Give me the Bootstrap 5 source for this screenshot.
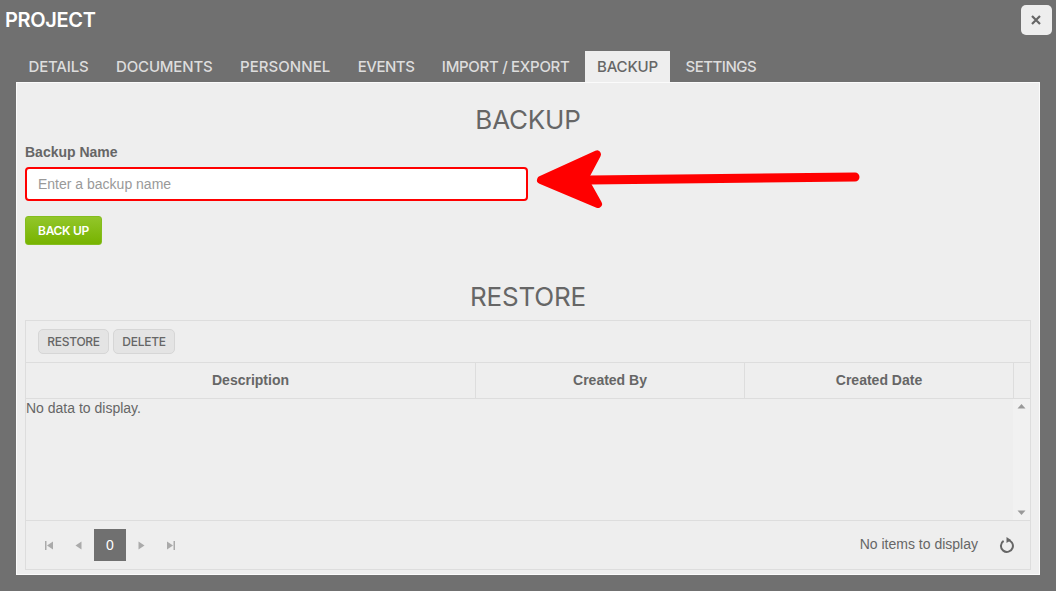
<!DOCTYPE html>
<html lang="en"><head><meta charset="utf-8"><title>Project</title>
<link rel="stylesheet" href="https://cdn.jsdelivr.net/npm/bootstrap@5.3.0/dist/css/bootstrap.min.css">
<style>
html,body{height:591px;overflow:hidden}
body{background:#707070;font-family:"Liberation Sans",Arial,sans-serif;color:#666;position:relative}
.disp{font-family:Inter,"Open Sans",sans-serif}
.topbar{height:51px;padding:5px 4px 0 5px}
.ptitle{font-size:20px;font-weight:600;color:#fff;letter-spacing:-.35px;margin:0;line-height:30px}
.closer{width:31px;height:30px;background:#eee;border:0;border-radius:5px;padding:0 1px 0 0;color:#666}
.tabrow{padding-left:16px;height:31px}
.tabitem{display:block;padding:0 12.5px;margin-right:2.5px;height:31px;line-height:31px;font-size:15px;font-weight:500;color:#ddd;letter-spacing:-.17px;text-decoration:none}
.tabitem.on{background:#eee;color:#666}
.tabitem.wider{letter-spacing:.05px}
.tabitem.tighter{letter-spacing:-.3px}
.tabitem.tightest{letter-spacing:-.5px}
.panel{margin:0 16px;height:493px;background:#eee;border:1px solid #fbfbfb;padding:0 8px}
.heading{font-size:26px;font-weight:400;color:#666;text-align:center;margin:0;letter-spacing:-.2px;line-height:30px}
.h1wrap{padding-top:22px;height:61px}
.lab{font-size:14px;font-weight:700;line-height:16px;margin:0 0 7px;display:block}
.nameinput{width:503px;height:34px;border:2px solid #f00;border-radius:4px;padding:0 11px;font-size:14px;background:#fff;color:#666}
.nameinput::placeholder{color:#999;opacity:1}
.nameinput:focus{border-color:#f00;box-shadow:none}
.greenbtn{margin-top:15px;width:77px;height:29px;padding:0;border:1px solid #84bd1e;border-radius:3px;background:linear-gradient(#92c62a,#77b300);color:#fff;font-size:12px;font-weight:600;letter-spacing:-.3px}
.h2wrap{margin-top:37px;height:30px}
.gridbox{margin-top:8px;height:250px;border:1px solid #ddd}
.tools{height:42px;padding:8px 12px;border-bottom:1px solid #ddd;gap:4px}
.toolbtn{height:25px;padding:0;border:1px solid #d6d6d6;border-radius:5px;background:#e4e4e4;color:#666;font-size:12px;font-weight:500;letter-spacing:-.25px}
.w71{width:71px}.w62{width:62px}
.hdr{height:36px;border-bottom:1px solid #ddd;font-size:14px;font-weight:700}
.hcell{border-right:1px solid #ddd;display:flex;align-items:center;justify-content:center}
.c1{width:450px}.c2,.c3{width:269px}.c4{flex:1}
.gbody{height:121px;font-size:14px;line-height:16px}
.gmsg{flex:1;padding:1px 0}
.sbar{width:17px;background:#f1f1f1}
.gfoot{height:49px;border-top:1px solid #ddd;padding:0 15px 0 11.5px;font-size:14px}
.pgcur{width:32px;height:32px;background:#707070;color:#fff;display:flex;align-items:center;justify-content:center;font-size:14px;margin:0 4px}
.pgi{width:23px;display:flex;justify-content:center}
.gapfirst{margin-right:6.5px}
.gaplast{margin-left:5.5px}
.noitems{padding-bottom:1px;padding-left:1px}
.refresh{margin-left:21px}
.overlay{position:absolute;left:0;top:0;pointer-events:none}
</style></head><body>
<div class="topbar d-flex justify-content-between align-items-start">
  <h1 class="ptitle disp">PROJECT</h1>
  <button class="closer d-flex align-items-center justify-content-center" aria-label="Close"><svg width="10" height="10" viewBox="0 0 10 10"><path d="M1 1L9 9M9 1L1 9" stroke="#666" stroke-width="2.2"/></svg></button>
</div>
<nav class="tabrow d-flex disp">
  <a class="tabitem" href="#">DETAILS</a><a class="tabitem" href="#">DOCUMENTS</a><a class="tabitem wider" href="#">PERSONNEL</a><a class="tabitem tightest" href="#">EVENTS</a><a class="tabitem tighter" href="#">IMPORT / EXPORT</a><a class="tabitem on" href="#">BACKUP</a><a class="tabitem tightest" href="#">SETTINGS</a>
</nav>
<main class="panel">
  <div class="h1wrap"><h2 class="heading disp">BACKUP</h2></div>
  <label class="lab" for="bn">Backup Name</label>
  <input id="bn" class="form-control nameinput" placeholder="Enter a backup name">
  <button class="greenbtn d-block disp">BACK UP</button>
  <div class="h2wrap"><h2 class="heading disp">RESTORE</h2></div>
  <section class="gridbox">
    <div class="tools d-flex disp"><button class="toolbtn w71">RESTORE</button><button class="toolbtn w62">DELETE</button></div>
    <div class="hdr d-flex"><div class="hcell c1">Description</div><div class="hcell c2">Created By</div><div class="hcell c3">Created Date</div><div class="c4"></div></div>
    <div class="gbody d-flex">
      <div class="gmsg">No data to display.</div>
      <div class="sbar d-flex flex-column justify-content-between align-items-center py-1">
        <svg width="9" height="6" viewBox="0 0 9 6"><path d="M4.5 1L8.5 5.500H.5Z" fill="#999"/></svg>
        <svg width="9" height="6" viewBox="0 0 9 6"><path d="M4.5 5L8.5 .5H.5Z" fill="#999"/></svg>
      </div>
    </div>
    <div class="gfoot d-flex align-items-center">
      <span class="pgi gapfirst"><svg width="9" height="9" viewBox="0 0 9 9"><path d="M0 0H1.500V9H0ZM8 .5V8.500L2 4.500Z" fill="#aaa"/></svg></span>
      <span class="pgi"><svg width="7" height="9" viewBox="0 0 7 9"><path d="M6.500 .5V8.500L.5 4.500Z" fill="#aaa"/></svg></span>
      <span class="pgcur">0</span>
      <span class="pgi"><svg width="7" height="9" viewBox="0 0 7 9"><path d="M.5 .5V8.500L6.500 4.500Z" fill="#aaa"/></svg></span>
      <span class="pgi gaplast"><svg width="9" height="9" viewBox="0 0 9 9"><path d="M9 0H7.500V9H9ZM1 .5V8.500L7 4.500Z" fill="#aaa"/></svg></span>
      <span class="ms-auto noitems">No items to display</span>
      <svg class="refresh" width="16" height="16" viewBox="0 0 16 16"><path d="M4.600 3.900A6 6 0 1 0 8 2.900" fill="none" stroke="#666" stroke-width="2"/><path d="M7.500 0L12 3L7.500 6Z" fill="#666"/></svg>
    </div>
  </section>
</main>
<svg class="overlay" width="1056" height="591" viewBox="0 0 1056 591" aria-hidden="true">
  <path d="M590 180L855 177" stroke="#f00" stroke-width="9" stroke-linecap="round"/>
  <path d="M541 180L597 154.500L584 179L598 204Z" fill="#f00" stroke="#f00" stroke-width="8" stroke-linejoin="round"/>
</svg>
</body></html>
